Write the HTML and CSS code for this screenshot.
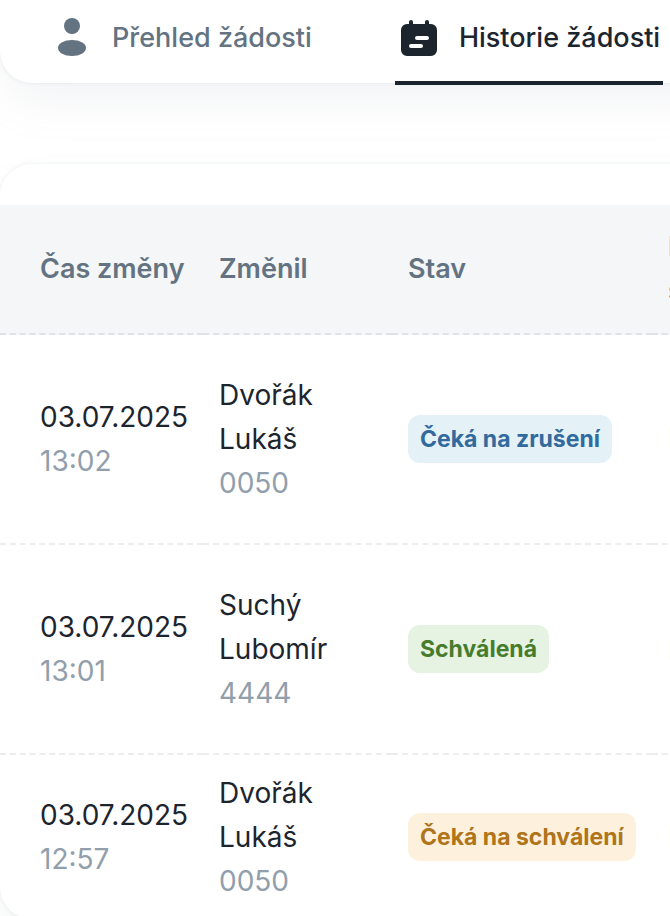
FILE: index.html
```html
<!DOCTYPE html>
<html lang="cs">
<head>
<meta charset="utf-8">
<meta name="viewport" content="width=device-width, initial-scale=1">
<title>Historie žádosti</title>
<link rel="stylesheet" href="styles.css">
</head>
<body>
<nav class="card tabs">
  <a class="tab" href="#prehled">
    <svg class="tab-icon" viewBox="0 0 24 24" aria-hidden="true"><circle cx="12" cy="6" r="4"/><ellipse cx="12" cy="17" rx="7" ry="4"/></svg>
    Přehled žádosti
  </a>
  <a class="tab tab-active" href="#historie" aria-current="page">
    <svg class="tab-icon" viewBox="0 0 24 24" aria-hidden="true"><path fill-rule="evenodd" d="M8 3a1 1 0 0 1 1 1v1h6V4a1 1 0 1 1 2 0v1h1a3 3 0 0 1 3 3v10a3 3 0 0 1-3 3H6a3 3 0 0 1-3-3V8a3 3 0 0 1 3-3h1V4a1 1 0 0 1 1-1Zm3 8a1 1 0 1 0 0 2h5a1 1 0 1 0 0-2ZM8 15a1 1 0 1 0 0 2h5a1 1 0 1 0 0-2Z"/></svg>
    Historie žádosti
  </a>
</nav>
<main class="card history">
  <table class="history-table">
    <colgroup><col class="col-time"><col class="col-user"><col class="col-state"><col></colgroup>
    <thead>
      <tr><th>Čas změny</th><th>Změnil</th><th>Stav</th><th>P<br>s</th></tr>
    </thead>
    <tbody>
      <tr>
        <td>03.07.2025<span class="sub">13:02</span></td>
        <td>Dvořák Lukáš<span class="sub">0050</span></td>
        <td><span class="badge badge-info">Čeká na zrušení</span></td>
        <td>P</td>
      </tr>
      <tr>
        <td>03.07.2025<span class="sub">13:01</span></td>
        <td>Suchý Lubomír<span class="sub">4444</span></td>
        <td><span class="badge badge-success">Schválená</span></td>
        <td>P</td>
      </tr>
      <tr>
        <td>03.07.2025<span class="sub">12:57</span></td>
        <td>Dvořák Lukáš<span class="sub">0050</span></td>
        <td><span class="badge badge-warning">Čeká na schválení</span></td>
        <td>P</td>
      </tr>
    </tbody>
  </table>
</main>
</body>
</html>
```
FILE: styles.css
```css
* { box-sizing: border-box; }

body {
  margin: 0;
  overflow: hidden;
  background: #fff;
  color: #1c252e;
  font: 400 28px/44px Inter, "Liberation Sans", sans-serif;
}

.card {
  background: #fff;
  box-shadow: 0 0 4px rgba(145, 158, 171, .2), 0 24px 48px -8px rgba(145, 158, 171, .12);
}

.tabs {
  display: flex;
  gap: 80px;
  margin-right: -64px;
  padding: 14px 48px 0;
  border-radius: 0 0 32px 32px;
}

.tab {
  position: relative;
  display: flex;
  align-items: center;
  gap: 16px;
  padding: 0 3px 21px 0;
  color: #637381;
  font-size: 27px;
  font-weight: 500;
  text-decoration: none;
  white-space: nowrap;
}

.tab-active { color: #1c252e; }

.tab-active::after {
  content: "";
  position: absolute;
  right: 0;
  bottom: -2px;
  left: 0;
  height: 4px;
  background: #1c252e;
}

.tab-icon {
  flex: none;
  width: 48px;
  height: 48px;
  fill: currentColor;
}

.history {
  margin: 81px -64px 0 0;
  padding-top: 41px;
  border-radius: 32px;
}

.history-table {
  width: 100%;
  table-layout: fixed;
  border-collapse: separate;
  border-spacing: 0;
}

.col-time { width: 203px; }
.col-user { width: 189px; }
.col-state { width: 260px; }

th, td {
  padding: 16px;
  text-align: left;
  vertical-align: middle;
  border-bottom: 2px dashed #ebedef;
}

th {
  height: 130px;
  background: #f4f6f8;
  border-color: #dfe3e8;
  color: #637381;
  font-size: 27px;
  font-weight: 600;
}

td { height: 210px; }

th:first-child, td:first-child { padding: 16px 0 16px 40px; }

tbody tr:last-child td {
  height: 164px;
  border-bottom: 0;
}

.sub {
  display: block;
  color: #919eab;
}

.badge {
  display: inline-block;
  padding: 0 12px;
  border-radius: 12px;
  font-size: 23px;
  font-weight: 700;
  line-height: 48px;
  white-space: nowrap;
  vertical-align: middle;
}

.badge-info { background: #e4f1f7; color: #326a9e; }
.badge-success { background: #e6f2e2; color: #467c2c; }
.badge-warning { background: #fdf1de; color: #b0741a; }
```
